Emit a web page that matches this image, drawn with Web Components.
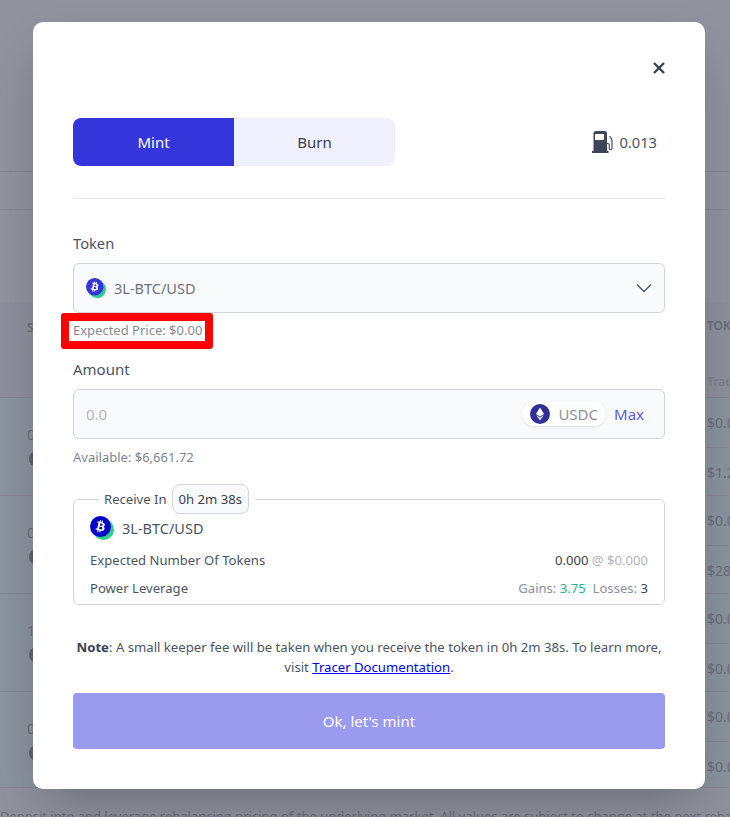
<!DOCTYPE html>
<html>
<head>
<meta charset="utf-8">
<style>
  html, body { margin: 0; padding: 0; height: 817px; overflow: hidden; }
  body { font-family: "Noto Sans", sans-serif; position: relative; width: 730px; }
</style>
</head>
<body>
<mint-page>
  <mint-modal>
    <mint-tabs gas="0.013"></mint-tabs>
    <token-select label="Token" token="3L-BTC/USD"></token-select>
    <amount-field label="Amount" placeholder="0.0" currency="USDC" available="Available: $6,661.72"></amount-field>
    <receive-box time="0h 2m 38s" token="3L-BTC/USD"></receive-box>
    <mint-note time="0h 2m 38s"></mint-note>
    <mint-button>Ok, let's mint</mint-button>
  </mint-modal>
</mint-page>

<script>
const FONT = '"Noto Sans", sans-serif';

const BTC_PATH = 'M17.291 10.29c.24-1.59-.974-2.45-2.64-3.03l.54-2.153-1.315-.33-.525 2.107c-.345-.087-.705-.167-1.064-.25l.526-2.127-1.32-.33-.54 2.165c-.285-.067-.565-.132-.84-.2l-1.815-.45-.35 1.407s.975.225.955.236c.535.136.63.486.615.766l-1.477 5.92c-.075.166-.24.406-.614.314.015.02-.96-.24-.96-.24l-.66 1.51 1.71.426.93.242-.54 2.19 1.32.327.54-2.17c.36.1.705.19 1.05.273l-.51 2.154 1.32.33.545-2.19c2.24.427 3.93.257 4.64-1.774.57-1.637-.03-2.58-1.217-3.196.854-.193 1.5-.76 1.68-1.93h.01zm-3.01 4.22c-.404 1.64-3.157.75-4.05.53l.72-2.9c.896.23 3.757.67 3.33 2.37zm.41-4.24c-.37 1.49-2.662.735-3.405.55l.654-2.64c.744.18 3.137.524 2.75 2.084v.006z';

const btcIcon = (size, bg) => `
  <svg width="${size}" height="${size}" viewBox="0 0 24 24" style="display:block;flex:none">
    <circle cx="13.5" cy="13.5" r="10.5" fill="#2ecf8a"/>
    <circle cx="10.5" cy="10.5" r="10.5" fill="${bg}"/>
    <g transform="translate(10.5 10.5) scale(.82) translate(-12 -12)"><path fill="#fff" fill-rule="evenodd" d="${BTC_PATH}"/></g>
  </svg>`;

class MintPage extends HTMLElement {
  constructor() {
    super();
    this.attachShadow({ mode: 'open' });
    const right = ['$0.0', '$1.2', '$0.0', '$28', '$0.0', '$0.0', '$0.0', '$0.0'];
    const left = ['0', '0', '1', '0'];
    const rows = left.map((v, i) => `
      <div class="row">
        <div class="left"><span>${v}</span><i></i></div>
        <div class="right"><span>${right[i * 2]}</span><span>${right[i * 2 + 1]}</span></div>
      </div>`).join('');
    this.shadowRoot.innerHTML = `
      <style>
        :host { display: block; width: 730px; height: 817px; position: relative; overflow: hidden;
          background: #8f929d; font-family: ${FONT}; font-size: 14px; color: #6a6e7b; }
        .top { height: 171px; background: #90939e; }
        .band { height: 37px; background: #90939e; border-top: 1px solid #85888f; border-bottom: 1px solid #85888f; }
        .gap { height: 92px; background: #90939e; }
        .head { height: 95px; background: #8d909c; padding: 15px 0 0 27px; box-sizing: border-box; position: relative; }
        .head b { font-weight: 600; font-size: 12px; }
        .head .tok { position: absolute; left: 707px; top: 15px; }
        .head .sub { position: absolute; left: 707px; top: 71px; font-size: 12px; font-weight: 600; color: #7d808c; }
        .row { height: 98px; box-sizing: border-box; border-top: 1px solid #858892; display: flex; justify-content: space-between; background: linear-gradient(90deg, #8a939e 0 33px, #8f929d 700px, #8a939e 705px); }
        .left { padding: 29px 0 0 27px; }
        .left span { display: block; line-height: 16px; }
        .left i { display: block; width: 16px; height: 16px; border-radius: 50%; background: #5f636e; margin-top: 8px; margin-left: 2px; }
        .right { width: 23px; display: flex; flex-direction: column; white-space: nowrap; }
        .right span { height: 49px; line-height: 49px; box-sizing: border-box; }
        .right span + span { border-top: 1px solid #858892; }
        .foot { border-top: 1px solid #858892; height: 30px; padding: 19px 0 0 0; white-space: nowrap; box-sizing: border-box; color: #6a6e7b; background: #8f929d; font-size: 13px; margin-top: -2px; }
        .modal-wrap { position: absolute; left: 33px; top: 22px; }
      </style>
      <div class="top"></div>
      <div class="band"></div>
      <div class="gap"></div>
      <div class="head"><b>S</b><b class="tok">TOK</b><b class="sub">Trac</b></div>
      ${rows}
      <div class="foot">Deposit into and leverage rebalancing pricing of the underlying market. All values are subject to change at the next rebalance</div>
      <div class="modal-wrap"><slot></slot></div>
    `;
  }
}

class MintModal extends HTMLElement {
  constructor() {
    super();
    this.attachShadow({ mode: 'open' });
    this.shadowRoot.innerHTML = `
      <style>
        :host { display: block; box-sizing: border-box; width: 672px; height: 767px; padding: 0 40px;
          background: #fff; border-radius: 10px; box-shadow: 0 25px 50px -12px rgba(0,0,0,.25);
          font-family: ${FONT}; color: #374151; position: relative; }
        .close { position: absolute; left: 620px; top: 40px; width: 12px; height: 12px; display: block; }
      </style>
      <svg class="close" viewBox="0 0 12 12"><path d="M1 1l10 10M11 1L1 11" stroke="#374151" stroke-width="2.4" fill="none"/></svg>
      <slot></slot>
    `;
  }
}

class MintTabs extends HTMLElement {
  constructor() {
    super();
    this.attachShadow({ mode: 'open' });
    this.shadowRoot.innerHTML = `
      <style>
        :host { display: block; padding-top: 96px; }
        .bar { display: flex; align-items: center; justify-content: space-between; padding-bottom: 32px; border-bottom: 1px solid #e5e7eb; }
        .tabs { display: flex; width: 322px; height: 48px; border-radius: 8px; overflow: hidden; }
        .tabs div { display: flex; align-items: center; justify-content: center; font-size: 15px; }
        .mint { width: 161px; background: #3535dc; color: #fff; }
        .burn { width: 161px; background: #f0f0ff; color: #374151; }
        .gas { display: flex; align-items: center; gap: 6px; font-size: 14.7px; margin-right: 8px; color: #4b5563; }
      </style>
      <div class="bar">
        <div class="tabs"><div class="mint">Mint</div><div class="burn">Burn</div></div>
        <div class="gas">
          <svg width="21" height="22" viewBox="0 0 21 22">
            <path fill="#3d4659" d="M1.5 2.5A2.5 2.5 0 0 1 4 0h8.5A2.5 2.5 0 0 1 15 2.5V20H1.5z M0 20h16.5v2H0z"/>
            <rect x="3" y="3" width="9" height="6" rx=".5" fill="#fff"/>
            <path d="M15 12.5h1a1.2 1.2 0 0 1 1.2 1.2v3.6a1.4 1.4 0 0 0 2.8 0V9.5c0-1.6-1.4-2.4-2.2-4.5" stroke="#3d4659" stroke-width="1.1" fill="none"/>
          </svg>
          <span>${this.getAttribute('gas')}</span>
        </div>
      </div>
    `;
  }
}

class TokenSelect extends HTMLElement {
  constructor() {
    super();
    this.attachShadow({ mode: 'open' });
    this.shadowRoot.innerHTML = `
      <style>
        :host { display: block; padding-top: 34px; }
        label { display: block; font-size: 14.7px; line-height: 20px; color: #4b5563; margin-bottom: 10px; }
        .box { display: flex; align-items: center; height: 50px; box-sizing: border-box; padding: 0 12px 0 12px; gap: 8px;
          background: #f9fafb; border: 1px solid #d1d5db; border-radius: 6px; font-size: 14.5px; color: #6b7280; }
        .box span { flex: 1; }
        .price { display: block; width: max-content; box-sizing: border-box; margin: 0 0 0 -12px; border: 8px solid #f00; border-radius: 3px;
          padding: 0 3px 0 4px; height: 36px; line-height: 19px; font-size: 13px; color: #868b96; background: #fff; }
      </style>
      <label>${this.getAttribute('label')}</label>
      <div class="box">
        ${btcIcon(20, '#3535dc')}
        <span>${this.getAttribute('token')}</span>
        <svg width="16" height="10" viewBox="0 0 16 10"><path d="M1 1.5l7 7 7-7" stroke="#4b5563" stroke-width="1.4" fill="none"/></svg>
      </div>
      <div class="price">Expected Price: $0.00</div>
    `;
  }
}

class AmountField extends HTMLElement {
  constructor() {
    super();
    this.attachShadow({ mode: 'open' });
    this.shadowRoot.innerHTML = `
      <style>
        :host { display: block; padding-top: 10px; }
        label { display: block; font-size: 15px; line-height: 20px; color: #4b5563; margin-bottom: 10px; }
        .box { display: flex; align-items: center; height: 50px; box-sizing: border-box; padding: 0 20px 0 12px;
          background: #f9fafb; border: 1px solid #d1d5db; border-radius: 6px; font-size: 15px; }
        .ph { flex: 1; color: #b4b8c0; }
        .pill { display: flex; align-items: center; gap: 8px; height: 24px; padding: 0 8px; background: #fff; border-radius: 12px;
          box-shadow: 0 1px 3px rgba(0,0,0,.1); color: #8d919c; }
        .max { color: #5a5ae0; margin-left: 8px; }
        .avail { font-size: 13px; line-height: 18px; color: #7f8490; margin-top: 9px; }
      </style>
      <label>${this.getAttribute('label')}</label>
      <div class="box">
        <span class="ph">${this.getAttribute('placeholder')}</span>
        <div class="pill">
          <svg width="20" height="20" viewBox="0 0 20 20"><circle cx="10" cy="10" r="10" fill="#2f2f96"/><path fill="#fff" d="M10 3.5L14 10l-4 2.4L6 10z"/><path fill="#fff" d="M6 11l4 2.4 4-2.4-4 5.5z" opacity=".85"/></svg>
          <span>${this.getAttribute('currency')}</span>
        </div>
        <span class="max">Max</span>
      </div>
      <div class="avail">${this.getAttribute('available')}</div>
    `;
  }
}

class ReceiveBox extends HTMLElement {
  constructor() {
    super();
    this.attachShadow({ mode: 'open' });
    this.shadowRoot.innerHTML = `
      <style>
        :host { display: block; margin-top: 18px; }
        fieldset { margin: 0; padding: 0 16px; height: 121px; box-sizing: border-box; border: 1px solid #d1d5db; border-radius: 6px; min-width: 0; }
        legend { display: flex; align-items: center; gap: 5px; padding: 0 6px; margin-left: 8px; font-size: 13.1px; color: #4b5563; height: 30px; }
        .pill { border: 1px solid #d1d5db; background: #f9fafb; border-radius: 8px; padding: 0 6px; height: 28px; line-height: 28px; color: #374151; }
        .tok { display: flex; align-items: center; gap: 8px; font-size: 14.5px; color: #4b5563; height: 28px; margin-bottom: 4px; }
        .line { display: flex; justify-content: space-between; align-items: center; font-size: 13.1px; height: 28px; color: #4b5563; }
        .mute { color: #8d919c; } .light { color: #b0b4bc; } .green { color: #22b985; } .dark { color: #374151; }
      </style>
      <fieldset>
        <legend>Receive In <span class="pill">${this.getAttribute('time')}</span></legend>
        <div class="tok">${btcIcon(24, '#0000c8')}<span>${this.getAttribute('token')}</span></div>
        <div class="line"><span>Expected Number Of Tokens</span><span><span class="dark">0.000</span> <span class="light">@ $0.000</span></span></div>
        <div class="line"><span>Power Leverage</span><span class="mute">Gains: <span class="green">3.75</span> &nbsp;Losses: <span class="dark">3</span></span></div>
      </fieldset>
    `;
  }
}

class MintNote extends HTMLElement {
  constructor() {
    super();
    this.attachShadow({ mode: 'open' });
    this.shadowRoot.innerHTML = `
      <style>
        :host { display: block; margin-top: 32px; text-align: center; font-size: 13.15px; line-height: 20px; color: #4b5563; }
        b { color: #374151; }
        a { color: #0000ee; }
      </style>
      <b>Note</b>: A small keeper fee will be taken when you receive the token in ${this.getAttribute('time')}. To learn more,<br>
      visit <a href="#">Tracer Documentation</a>.
    `;
  }
}

class MintButton extends HTMLElement {
  constructor() {
    super();
    this.attachShadow({ mode: 'open' });
    this.shadowRoot.innerHTML = `
      <style>
        :host { display: flex; align-items: center; justify-content: center; height: 56px; margin-top: 16px;
          background: #9a9aee; border-radius: 4px; color: #fff; font-size: 15px; }
      </style>
      <slot></slot>
    `;
  }
}

customElements.define('mint-page', MintPage);
customElements.define('mint-modal', MintModal);
customElements.define('mint-tabs', MintTabs);
customElements.define('token-select', TokenSelect);
customElements.define('amount-field', AmountField);
customElements.define('receive-box', ReceiveBox);
customElements.define('mint-note', MintNote);
customElements.define('mint-button', MintButton);
</script>
</body>
</html>
